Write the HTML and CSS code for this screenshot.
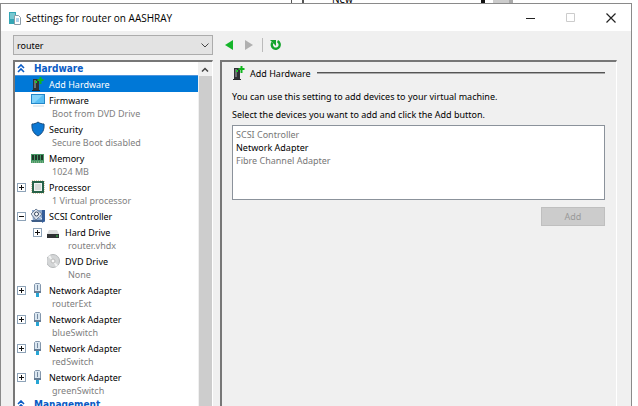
FILE: index.html
```html
<!DOCTYPE html>
<html lang="en">
<head>
<meta charset="utf-8">
<title>Settings for router on AASHRAY</title>
<link rel="stylesheet" href="styles.css">
</head>
<body>
<svg class="defs" aria-hidden="true">
  <symbol id="server-add" viewBox="0 0 16 16">
    <path d="M2 3h6v12H2z" fill="#303236"/><path d="M3 4h2v8H3z" fill="#6d7074"/><path d="M1 14h8v1H1z" fill="#26282b"/><path d="M4 5h2v2H4z" fill="#20c830"/>
    <path d="M8.500 1h2v2h2v2h-2v3h-2V5h-2V3h2z" fill="#10b51c"/>
  </symbol>
  <symbol id="monitor" viewBox="0 0 16 16">
    <path d="M0 2h14v10H0z" fill="#2386c8"/><path d="M1 3h12v8H1z" fill="#58bff5"/><path d="M1 3h11L3 11H1z" fill="#83d4fb"/><path d="M2 14h11" stroke="#ccdce4"/>
  </symbol>
  <symbol id="shield" viewBox="0 0 16 16">
    <path d="M7 1c2 1.500 4 2 6 2 .5 6-1.500 9.500-6 12C2.500 12.500.5 9 1 3c2 0 4-.5 6-2z" fill="#0b78d4" stroke="#174b7d"/>
  </symbol>
  <symbol id="memory" viewBox="0 0 16 16">
    <path d="M0 4h13v9H0z" fill="#479866"/><path d="M1 5h2v5H1zM4 5h2v5H4zM7 5h2v5H7zM10 5h2v5h-2z" fill="#20372a"/><path d="M1 12h12" stroke="#a8c79c" stroke-dasharray="1 1"/>
  </symbol>
  <symbol id="cpu" viewBox="0 0 16 16">
    <path d="M1 2h12v12H1z" fill="#286349" stroke="#b89458" stroke-dasharray="1 1"/><path d="M1 2h12v12H1z" fill="#286349"/><path d="M3 4h8v8H3z" fill="#f2f4f2"/><path d="M4 5h6v6H4z" fill="#d6dad7"/>
  </symbol>
  <symbol id="scsi" viewBox="0 0 16 16">
    <path d="M1 2h13v12H2z" fill="#8ba7cb"/><path d="M11 2h3v11l-3 2z" fill="#355d98"/><path d="M0 12h11v2H1z" fill="#3f5e88"/><path d="M0 6l5-5 6 5-6 6z" fill="#dbe2ec" stroke="#71839b"/><circle cx="5.500" cy="6" r="2" fill="#fff" stroke="#35455c"/><path d="M7 8l4 3" stroke="#e8eef6"/>
  </symbol>
  <symbol id="disk" viewBox="0 0 16 16">
    <path d="M2 6h8l2 4H0z" fill="#dcdddd"/><path d="M0 10h12v4H0z" fill="#2e3032"/><path d="M9 12h2" stroke="#38d04a"/>
  </symbol>
  <symbol id="disc" viewBox="0 0 16 16">
    <circle cx="6" cy="8" r="6.500" fill="#d4d6d7" stroke="#b5b8ba"/><path d="M6 8L1 4l2-2zM6 8l5 4-2 2z" fill="#f2f3f3"/><circle cx="6" cy="8" r="2" fill="#fafafa" stroke="#bbb"/>
  </symbol>
  <symbol id="plug" viewBox="0 0 16 16">
    <path d="M3.500 9.500v-7l1-1h4l1 1v7z" fill="#dbe7f1" stroke="#8497ad"/><path d="M6.500 3v5" stroke="#7589a0"/><path d="M3 9h7v2H3z" fill="#667c94"/><path d="M5 11h3v4H5z" fill="#27a5d4"/>
  </symbol>
  <symbol id="collapse" viewBox="0 0 8 9">
    <path d="M1 4l3-3 3 3M1 8l3-3 3 3" fill="none" stroke="#0a5bc4" stroke-width="1.600"/>
  </symbol>
</svg>

<div class="backdrop" aria-hidden="true"><span class="backdrop-bar"></span><span class="backdrop-text">New</span><span class="backdrop-arrow"></span><span class="backdrop-scroll"></span></div>

<main class="window">
  <header class="titlebar">
    <svg class="app-icon" viewBox="0 0 14 14" aria-hidden="true"><path d="M1 1h7v12H1z" fill="#35a6b5"/><path d="M2 3h5M2 5h5M2 7h4" stroke="#bdebef"/><path d="M6.500 4.500h4l2 2v7h-6z" fill="#fff" stroke="#8c9ca7"/><path d="M8 8h3M8 10h3" stroke="#61a5d6"/></svg>
    <h1>Settings for router on AASHRAY</h1>
    <div class="controls">
      <button type="button" aria-label="Minimize"><svg viewBox="0 0 10 10"><path d="M0 5.500h9" stroke="#222"/></svg></button>
      <button type="button" aria-label="Maximize" disabled><svg viewBox="0 0 10 10"><path d="M.5.5h8v8h-8z" fill="none" stroke="#ccc"/></svg></button>
      <button type="button" aria-label="Close"><svg viewBox="0 0 10 10"><path d="M.5.5l9 9M9.500.5l-9 9" stroke="#222" stroke-width="1.200"/></svg></button>
    </div>
  </header>

  <div class="content">
    <div class="sidebar">
      <div class="picker">
        <select aria-label="Virtual machine"><option>router</option></select>
        <svg viewBox="0 0 8 5" aria-hidden="true"><path d="M.5.500l3.500 3.500L7.500.5" fill="none" stroke="#444"/></svg>
      </div>
      <div class="tree-box">
        <nav class="tree" aria-label="Settings">
          <h2><svg><use href="#collapse"/></svg>Hardware</h2>
          <ul>
            <li class="item selected"><svg class="icon"><use href="#server-add"/></svg><a href="#add">Add Hardware</a></li>
            <li class="item"><svg class="icon"><use href="#monitor"/></svg><a href="#firmware">Firmware</a><small>Boot from DVD Drive</small></li>
            <li class="item"><svg class="icon"><use href="#shield"/></svg><a href="#security">Security</a><small>Secure Boot disabled</small></li>
            <li class="item"><svg class="icon"><use href="#memory"/></svg><a href="#memory-page">Memory</a><small>1024 MB</small></li>
            <li class="item"><button class="toggle plus" type="button" aria-label="Expand Processor"></button><svg class="icon"><use href="#cpu"/></svg><a href="#processor">Processor</a><small>1 Virtual processor</small></li>
            <li class="item"><button class="toggle" type="button" aria-label="Collapse SCSI Controller"></button><svg class="icon"><use href="#scsi"/></svg><a href="#scsi-page">SCSI Controller</a>
              <ul class="children">
                <li class="item"><button class="toggle plus" type="button" aria-label="Expand Hard Drive"></button><svg class="icon"><use href="#disk"/></svg><a href="#hard-drive">Hard Drive</a><small>router.vhdx</small></li>
                <li class="item"><svg class="icon"><use href="#disc"/></svg><a href="#dvd">DVD Drive</a><small>None</small></li>
              </ul>
            </li>
            <li class="item"><button class="toggle plus" type="button" aria-label="Expand routerExt"></button><svg class="icon"><use href="#plug"/></svg><a href="#net1">Network Adapter</a><small>routerExt</small></li>
            <li class="item"><button class="toggle plus" type="button" aria-label="Expand blueSwitch"></button><svg class="icon"><use href="#plug"/></svg><a href="#net2">Network Adapter</a><small>blueSwitch</small></li>
            <li class="item"><button class="toggle plus" type="button" aria-label="Expand redSwitch"></button><svg class="icon"><use href="#plug"/></svg><a href="#net3">Network Adapter</a><small>redSwitch</small></li>
            <li class="item"><button class="toggle plus" type="button" aria-label="Expand greenSwitch"></button><svg class="icon"><use href="#plug"/></svg><a href="#net4">Network Adapter</a><small>greenSwitch</small></li>
          </ul>
          <h2><svg><use href="#collapse"/></svg>Management</h2>
        </nav>
        <div class="scrollbar" aria-hidden="true"><svg viewBox="0 0 8 5"><path d="M1 4.500l3-3 3 3" fill="none" stroke="#444" stroke-width="1.500"/></svg><div class="thumb"></div></div>
      </div>
    </div>

    <div class="detail">
      <div class="toolbar">
        <button type="button" aria-label="Back"><svg viewBox="0 0 12 12"><path d="M9 1v10L1 6z" fill="#16b52b"/></svg></button>
        <button type="button" aria-label="Forward" disabled><svg viewBox="0 0 12 12"><path d="M2 1v10l8-5z" fill="#b0b0b0"/></svg></button>
        <span class="divider"></span>
        <button type="button" aria-label="Refresh"><svg viewBox="0 0 12 12"><path d="M7.500 2.200a4 4 0 1 1-5 1.300" fill="none" stroke="#14a42c" stroke-width="2.400"/><path d="M0 1h6v6z" fill="#14a42c"/></svg></button>
      </div>
      <section class="panel">
        <div class="panel-title"><svg class="icon"><use href="#server-add"/></svg><h2>Add Hardware</h2><span class="rule"></span></div>
        <p>You can use this setting to add devices to your virtual machine.</p>
        <label for="devices">Select the devices you want to add and click the Add button.</label>
        <select id="devices" class="devices" size="5">
          <option disabled>SCSI Controller</option>
          <option>Network Adapter</option>
          <option disabled>Fibre Channel Adapter</option>
        </select>
        <button class="add" type="button" disabled>Add</button>
      </section>
    </div>
  </div>
</main>
</body>
</html>
```
FILE: styles.css
```css
* { box-sizing: border-box; }

body {
  margin: 0;
  height: 100vh;
  overflow: hidden;
  display: flex;
  flex-direction: column;
  background: #fff;
  color: #000;
  font: 9px/13px "Noto Sans", Tahoma, sans-serif;
}

button, select { font: inherit; color: inherit; }
h1, h2, p, ul { margin: 0; padding: 0; font-weight: normal; }
h2 { font-size: 9px; }
ul { list-style: none; }
a { color: inherit; text-decoration: none; }
.defs { position: absolute; width: 0; height: 0; }
.icon { width: 16px; height: 16px; flex: none; }

.backdrop { height: 3px; flex: none; display: flex; align-items: flex-end; overflow: hidden; padding-left: 291px; }
.backdrop-bar { width: 13px; height: 3px; border: solid #555; border-width: 0 2px 0 1px; margin-right: 28px; }
.backdrop-text { font-size: 10px; line-height: 8px; }
.backdrop-arrow { width: 4px; height: 3px; background: #111; margin-left: 128px; }
.backdrop-scroll { width: 20px; height: 3px; background: #ccc; border-right: 4px solid #aaa; margin-left: 8px; }

.window {
  flex: 1;
  min-height: 0;
  margin-right: 6px;
  display: flex;
  flex-direction: column;
  background: #f0f0f0;
  border: 1px solid #8a8a8a;
  border-bottom: 0;
}

.titlebar { height: 27px; flex: none; display: flex; align-items: center; padding-left: 7px; background: #fff; }
.app-icon { width: 14px; height: 14px; margin-right: 4px; }
.titlebar h1 { flex: 1; font: 10px/16px "Open Sans", sans-serif; }
.controls { display: flex; }
.controls button { width: 40px; height: 26px; padding: 0; border: 0; background: none; display: grid; place-items: center; }
.controls svg { width: 10px; height: 10px; }

.content { flex: 1; min-height: 0; display: flex; gap: 7px; padding: 4px 14px 0 12px; }
.sidebar { width: 200px; flex: none; display: flex; flex-direction: column; gap: 5px; }

.picker { display: grid; align-items: center; flex: none; }
.picker select, .picker svg { grid-area: 1 / 1; }
.picker select { appearance: none; height: 20px; padding: 0 3px; border: 1px solid #acacac; border-radius: 0; background: #e3e3e3; }
.picker svg { width: 8px; height: 5px; justify-self: end; margin-right: 4px; pointer-events: none; }

.tree-box { flex: 1; min-height: 0; display: flex; overflow: hidden; background: #fff; border: solid #777; border-width: 2px 1px 0 2px; border-right-color: #fff; }
.tree { flex: 1; }
.tree h2 { height: 14px; display: flex; align-items: center; gap: 9px; padding-left: 2px; border-bottom: 1px solid #4e95dc; color: #0a5bc4; font: bold 10px/13px "DejaVu Sans Condensed", Tahoma, sans-serif; }
.tree h2 svg { width: 8px; height: 9px; }

.item { display: grid; grid-template-columns: 14px 16px 1fr; column-gap: 2px; align-items: center; }
.item > .icon { grid-column: 2; grid-row: 1; }
.item > a { grid-column: 3; grid-row: 1; }
.item > small { grid-column: 3; height: 13px; padding-left: 3px; font-size: 9px; line-height: 12px; color: #808080; }
.item.selected { background: #0078d7; color: #fff; }
.children { grid-column: 2 / -1; }

.toggle {
  grid-column: 1;
  grid-row: 1;
  width: 9px;
  height: 9px;
  margin-left: 2px;
  padding: 0;
  border: 1px solid #8ea3b8;
  background: linear-gradient(#111, #111) center / 5px 1px no-repeat, #fff;
}
.toggle.plus { background: linear-gradient(#111, #111) center / 5px 1px no-repeat, linear-gradient(#111, #111) center / 1px 5px no-repeat, #fff; }

.scrollbar { width: 14px; flex: none; display: flex; flex-direction: column; align-items: center; background: #f0f0f0; }
.scrollbar svg { width: 8px; height: 5px; margin: 5px 0 4px; }
.thumb { flex: 1; width: 13px; background: #cdcdcd; }

.detail { flex: 1; min-width: 0; display: flex; flex-direction: column; gap: 5px; }
.toolbar { height: 20px; flex: none; display: flex; align-items: center; gap: 7px; padding-left: 4px; }
.toolbar button { width: 12px; height: 12px; padding: 0; border: 0; background: none; display: grid; }
.toolbar svg { width: 12px; height: 12px; }
.divider { width: 1px; height: 14px; background: #bbb; }

.panel { flex: 1; display: flex; flex-direction: column; padding: 2px 11px 0 10px; border: solid #777; border-width: 2px 1px 0 2px; border-right-color: #fff; }
.panel-title { display: flex; align-items: center; height: 18px; margin-bottom: 8px; }
.panel-title h2 { margin: 0 6px 0 2px; }
.rule { flex: 1; height: 2px; border-top: 1px solid #555; background: #aaa; }
.panel p { margin-bottom: 5px; }
.panel label { margin-bottom: 4px; }

.devices { height: 75px; padding: 2px; overflow: hidden; border: 1px solid #8b929b; border-radius: 0; background: #fff; outline: 0; }
.devices option { min-height: 13px; padding: 0 1px; line-height: 13px; color: #000; }
.devices option:disabled { color: #777; }
.add { align-self: flex-end; width: 64px; height: 19px; margin-top: 7px; padding: 0; border: 1px solid #bfbfbf; background: #ccc; color: #999; }
```
